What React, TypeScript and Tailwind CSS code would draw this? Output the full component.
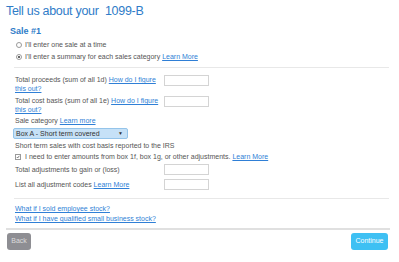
import { useState } from 'react';

const linkCls = 'text-[#2f7fd6] underline';

const Field = ({ children }: { children: React.ReactNode }) => (
  <div className="flex items-start">
    <div className="w-[149px] leading-[9px]">{children}</div>
    <div className="w-[45px] h-[11px] border border-[#d4d4d4] bg-white" />
  </div>
);

export default function App() {
  const [mode, setMode] = useState<'one' | 'summary'>('summary');
  const [adjust, setAdjust] = useState(true);

  return (
    <div className="w-[399px] h-[262px] bg-white text-[7px] text-[#555] font-['Liberation_Sans',Arial,sans-serif] overflow-hidden">
      {/* Heading */}
      <div className="mt-[3px] pl-[6px] text-[12.5px] leading-[16px] text-[#2f7cc8] tracking-[-0.3px]">
        Tell us about your&nbsp; 1099-B
      </div>
      <div className="mt-[7px] pl-[10px] text-[9px] leading-[10px] font-bold text-[#2f7cc8]">
        Sale #1
      </div>

      {/* Entry mode */}
      <div className="pl-[16px] mt-[4px] flex flex-col gap-[3px]">
        {[
          { id: 'one', label: "I'll enter one sale at a time" },
          { id: 'summary', label: "I'll enter a summary for each sales category" },
        ].map((opt) => (
          <div
            key={opt.id}
            className="flex items-center h-[9px] cursor-pointer"
            onClick={() => setMode(opt.id as 'one' | 'summary')}
          >
            <span className="w-[6px] h-[6px] rounded-full border border-[#9a9a9a] flex items-center justify-center">
              {mode === opt.id && <span className="w-[2px] h-[2px] rounded-full bg-[#333]" />}
            </span>
            <span className="ml-[3px] leading-[9px]">
              {opt.label}
              {opt.id === 'summary' && (
                <>
                  {' '}
                  <a className={linkCls}>Learn More</a>
                </>
              )}
            </span>
          </div>
        ))}
      </div>

      <div className="pl-[14px] pr-[10px]">
        <div className="mt-[6px] h-px bg-[#e8e8e8]" />

        <div className="mt-[7px] pl-px">
          <Field>
            Total proceeds (sum of all 1d) <a className={linkCls}>How do I figure this out?</a>
          </Field>
        </div>
        <div className="mt-[3px] pl-px">
          <Field>
            Total cost basis (sum of all 1e) <a className={linkCls}>How do I figure this out?</a>
          </Field>
        </div>

        <div className="mt-[2px] pl-px leading-[9px]">
          Sale category <a className={linkCls}>Learn more</a>
        </div>

        {/* Category select */}
        <div className="mt-[3px] w-[115px] h-[11px] ml-[-1px] rounded-[2px] border border-[#94c4ea] bg-[#c6e1f7] flex items-center justify-between pl-[2px] pr-[4px] text-[#333]">
          <span className="leading-[9px]">Box A - Short term covered</span>
          <span className="text-[5px]">▼</span>
        </div>

        <div className="mt-[2px] pl-px leading-[9px]">
          Short term sales with cost basis reported to the IRS
        </div>

        <div className="mt-[2px] pl-px flex items-center h-[9px] cursor-pointer" onClick={() => setAdjust(!adjust)}>
          <span className="w-[6px] h-[6px] border border-[#9a9a9a] bg-white flex items-center justify-center">
            {adjust && (
              <svg viewBox="0 0 10 10" className="w-[6px] h-[6px]">
                <path d="M2 5.2 L4.2 7.4 L8.4 2" fill="none" stroke="#333" strokeWidth="1.6" />
              </svg>
            )}
          </span>
          <span className="ml-[4px] leading-[9px]">
            I need to enter amounts from box 1f, box 1g, or other adjustments.{' '}
            <a className={linkCls}>Learn More</a>
          </span>
        </div>

        <div className="mt-[3px] pl-px flex items-center">
          <div className="w-[149px] leading-[9px]">Total adjustments to gain or (loss)</div>
          <div className="w-[45px] h-[11px] border border-[#d4d4d4]" />
        </div>
        <div className="mt-[4px] pl-px flex items-center">
          <div className="w-[149px] leading-[9px]">
            List all adjustment codes <a className={linkCls}>Learn More</a>
          </div>
          <div className="w-[45px] h-[11px] border border-[#d4d4d4]" />
        </div>

        <div className="mt-[8px] h-px bg-[#e8e8e8]" />

        <div className="mt-[5px] pl-px flex flex-col leading-[10px]">
          <a className={linkCls}>What if I sold employee stock?</a>
          <a className={linkCls}>What if I have qualified small business stock?</a>
        </div>
      </div>

      {/* Footer */}
      <div className="mt-[4px] ml-[6px] mr-[9px] h-[2px] bg-[#e0e0e0]" />
      <div className="mt-[3px] pl-[7px] pr-[11px] flex justify-between">
        <button className="w-[24px] h-[17px] rounded-[3px] bg-[#8e8e93] text-[#dcdcdc] text-[7px]">
          Back
        </button>
        <button className="w-[37px] h-[17px] rounded-[3px] bg-[#3ec0f3] text-white text-[7px]">
          Continue
        </button>
      </div>
    </div>
  );
}
